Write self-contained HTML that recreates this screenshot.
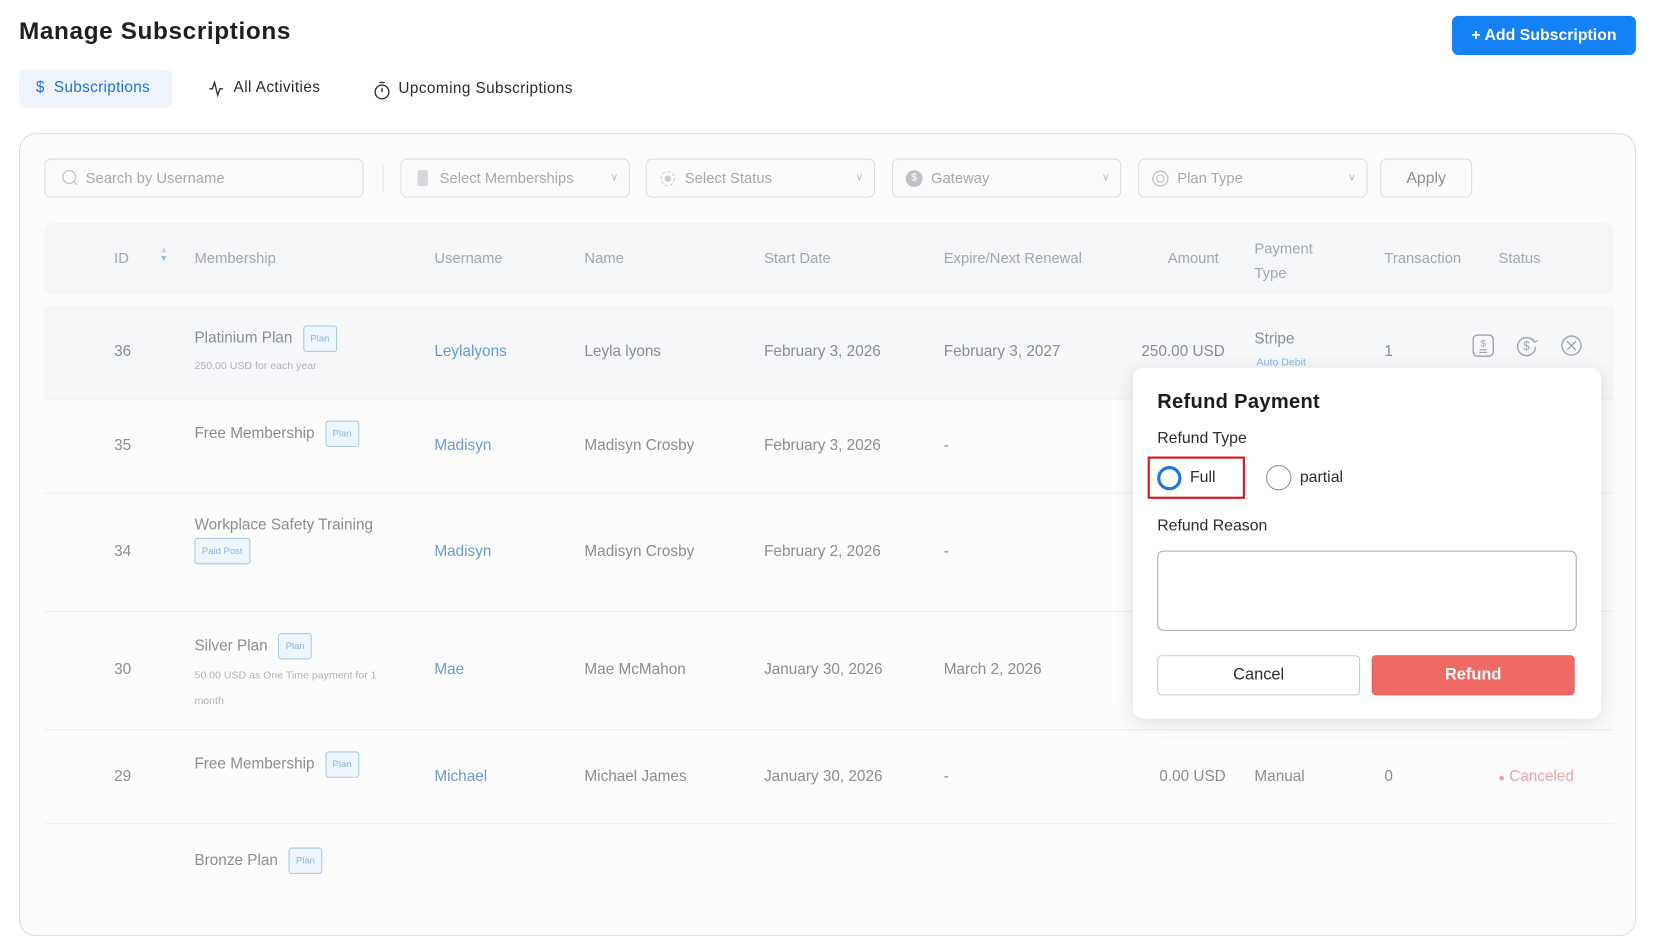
<!DOCTYPE html>
<html><head><meta charset="utf-8">
<style>
*{box-sizing:border-box;margin:0;padding:0}
html,body{width:1657px;height:856px;overflow:hidden;background:#fff;font-family:"Liberation Sans",sans-serif}
#w{position:absolute;left:0;top:0;width:1568px;height:810px;transform:scale(1.0568);transform-origin:0 0}
.a{position:absolute;white-space:nowrap}
.t{font-size:14px;color:#8a8d92}
.sel{position:absolute;top:150px;height:37px;border:1px solid #dcdee2;border-radius:6px;background:#fbfbfc;font-size:14px;color:#a6a9ae;line-height:35px}
.chev{position:absolute;right:10px;top:0;font-size:10px;color:#bbb}
.row{position:absolute;left:42px;width:1485px;border-bottom:1px solid #eceef1}
.badge{display:inline-block;border:1px solid #a9c8ea;background:#eef5fd;color:#8eb3dc;font-size:9px;border-radius:3px;padding:0 6px;height:25px;line-height:23px;vertical-align:middle;margin-left:10px}
.u{color:#6a9ad4;font-size:14.5px}
.sub{font-size:10px;color:#b0b3b8}
</style></head><body><div id="w">
<div class="a" style="left:18px;top:16px;font-size:23px;font-weight:bold;color:#1d1f23;letter-spacing:.6px">Manage Subscriptions</div>
<div class="a" style="left:1374px;top:15px;width:174px;height:37px;background:#1680f5;border-radius:6px;color:#fff;font-size:15px;font-weight:bold;line-height:37px;text-align:center">+ Add Subscription</div>

<div class="a" style="left:18px;top:66px;width:145px;height:36px;background:#edf4fc;border-radius:6px"></div>
<div class="a" style="left:34px;top:75px;font-size:14.5px;color:#1f74d6;letter-spacing:.3px">$&nbsp;&nbsp;Subscriptions</div>
<svg class="a" style="left:197px;top:75px" width="18" height="18" viewBox="0 0 18 18"><path d="M1 9h3l2-6 3 12 2-6h3" fill="none" stroke="#333" stroke-width="1.3"/></svg>
<div class="a" style="left:221px;top:75px;font-size:14.5px;color:#2a2c30;letter-spacing:.4px">All Activities</div>
<svg class="a" style="left:353px;top:76px" width="17" height="19" viewBox="0 0 17 19"><circle cx="8.5" cy="11" r="6.5" fill="none" stroke="#333" stroke-width="1.3"/><path d="M6 2h5M8.5 11V7" stroke="#333" stroke-width="1.3"/></svg>
<div class="a" style="left:377px;top:76px;font-size:14.5px;color:#2a2c30;letter-spacing:.4px">Upcoming Subscriptions</div>

<div class="a" style="left:18px;top:126px;width:1530px;height:760px;border:1px solid #d9dbde;border-radius:16px;background:#fcfcfd"></div>

<div class="sel" style="left:42px;width:302px;padding-left:38px">Search by Username</div>
<svg class="a" style="left:58px;top:160px" width="17" height="17"><circle cx="7.5" cy="7.5" r="6" fill="none" stroke="#c3c5c9" stroke-width="1.2"/><path d="M12 12l3 3" stroke="#c3c5c9" stroke-width="1.2"/></svg>
<div class="a" style="left:362px;top:156px;width:1px;height:26px;background:#e2e3e6"></div>
<div class="sel" style="left:379px;width:217px;padding-left:36px">Select Memberships<span class="chev">&#8744;</span></div>
<div class="a" style="left:395px;top:161px;width:10px;height:15px;background:#d5d8de;border-radius:2px"></div>
<div class="sel" style="left:611px;width:217px;padding-left:36px">Select Status<span class="chev">&#8744;</span></div>
<svg class="a" style="left:624px;top:161px" width="16" height="16"><circle cx="8" cy="8" r="6.5" fill="none" stroke="#ccc" stroke-dasharray="3 2"/><circle cx="8" cy="8" r="3" fill="#ccc"/></svg>
<div class="sel" style="left:844px;width:217px;padding-left:36px">Gateway<span class="chev">&#8744;</span></div>
<div class="a" style="left:857px;top:161px;width:16px;height:16px;border-radius:50%;background:#bfc3c9;color:#fff;font-size:10px;text-align:center;line-height:16px">$</div>
<div class="sel" style="left:1077px;width:217px;padding-left:36px">Plan Type<span class="chev">&#8744;</span></div>
<svg class="a" style="left:1089px;top:160px" width="18" height="18"><circle cx="9" cy="9" r="7" fill="none" stroke="#c6c9ce" stroke-width="1.5"/><circle cx="9" cy="9" r="3.5" fill="none" stroke="#c6c9ce" stroke-width="1.3"/></svg>
<div class="sel" style="left:1306px;width:87px;text-align:center;color:#8d9096;font-size:15px">Apply</div>

<div class="a" style="left:42px;top:211px;width:1485px;height:67px;background:#f5f6f8;border-radius:8px"></div>
<div class="a t" style="left:108px;top:236px;color:#a3a6ab">ID</div>
<div class="a" style="left:151px;top:233px;font-size:8px;line-height:8px;color:#cfd2d6">▲<br><span style="color:#8bb4e3">▼</span></div>
<div class="a t" style="left:184px;top:236px;color:#a3a6ab">Membership</div>
<div class="a t" style="left:411px;top:236px;color:#a3a6ab">Username</div>
<div class="a t" style="left:553px;top:236px;color:#a3a6ab">Name</div>
<div class="a t" style="left:723px;top:236px;color:#a3a6ab">Start Date</div>
<div class="a t" style="left:893px;top:236px;color:#a3a6ab">Expire/Next Renewal</div>
<div class="a t" style="left:1105px;top:236px;color:#a3a6ab">Amount</div>
<div class="a t" style="left:1187px;top:224px;color:#a3a6ab;line-height:23px">Payment<br>Type</div>
<div class="a t" style="left:1310px;top:236px;color:#a3a6ab">Transaction</div>
<div class="a t" style="left:1418px;top:236px;color:#a3a6ab">Status</div>

<div class="row" style="top:290px;height:88px;background:#f6f7f9"></div>
<div class="row" style="top:378px;height:89px"></div>
<div class="row" style="top:467px;height:112px"></div>
<div class="row" style="top:579px;height:112px"></div>
<div class="row" style="top:691px;height:89px"></div>

<div class="a t" style="left:108px;top:325px;font-size:14.5px">36</div>
<div class="a t" style="left:184px;top:308px;font-size:14.5px">Platinium Plan<span class="badge">Plan</span></div>
<div class="a sub" style="left:184px;top:341px">250.00 USD for each year</div>
<div class="a u" style="left:411px;top:325px">Leylalyons</div>
<div class="a t" style="left:553px;top:325px;font-size:14.5px">Leyla lyons</div>
<div class="a t" style="left:723px;top:325px;font-size:14.5px">February 3, 2026</div>
<div class="a t" style="left:893px;top:325px;font-size:14.5px">February 3, 2027</div>
<div class="a t" style="left:1080px;top:325px;font-size:14.5px">250.00 USD</div>
<div class="a t" style="left:1187px;top:313px;font-size:14.5px">Stripe</div>
<div class="a" style="left:1189px;top:338px;font-size:10px;color:#8bb4e3">Auto Debit</div>
<div class="a t" style="left:1310px;top:325px;font-size:14.5px">1</div>
<svg class="a" style="left:1392px;top:315px" width="24" height="24"><rect x="2" y="2" width="19" height="20" rx="4" fill="none" stroke="#a0a3a8" stroke-width="1.3"/><text x="11.5" y="13" font-size="9" text-anchor="middle" fill="#a0a3a8" font-family="Liberation Sans">$</text><path d="M8 16h7M8 18.5h7" stroke="#a0a3a8"/></svg>
<svg class="a" style="left:1433px;top:315px" width="24" height="24"><path d="M19 9A8.5 8.5 0 1 0 20 13" fill="none" stroke="#a0a3a8" stroke-width="1.3"/><path d="M17 5l2 4 3-2" fill="none" stroke="#a0a3a8"/><text x="11.5" y="16" font-size="11" text-anchor="middle" fill="#a0a3a8" font-family="Liberation Sans">$</text></svg>
<svg class="a" style="left:1475px;top:315px" width="24" height="24"><circle cx="12" cy="12" r="9" fill="none" stroke="#a0a3a8" stroke-width="1.3"/><path d="M8 8l8 8M16 8l-8 8" stroke="#a0a3a8" stroke-width="1.3"/></svg>

<div class="a t" style="left:108px;top:414px;font-size:14.5px">35</div>
<div class="a t" style="left:184px;top:398px;font-size:14.5px">Free Membership<span class="badge">Plan</span></div>
<div class="a u" style="left:411px;top:414px">Madisyn</div>
<div class="a t" style="left:553px;top:414px;font-size:14.5px">Madisyn Crosby</div>
<div class="a t" style="left:723px;top:414px;font-size:14.5px">February 3, 2026</div>
<div class="a t" style="left:893px;top:414px;font-size:14.5px">-</div>

<div class="a t" style="left:108px;top:514px;font-size:14.5px">34</div>
<div class="a t" style="left:184px;top:489px;font-size:14.5px">Workplace Safety Training</div>
<div class="a" style="left:184px;top:509px"><span class="badge" style="margin-left:0">Paid Post</span></div>
<div class="a u" style="left:411px;top:514px">Madisyn</div>
<div class="a t" style="left:553px;top:514px;font-size:14.5px">Madisyn Crosby</div>
<div class="a t" style="left:723px;top:514px;font-size:14.5px">February 2, 2026</div>
<div class="a t" style="left:893px;top:514px;font-size:14.5px">-</div>

<div class="a t" style="left:108px;top:626px;font-size:14.5px">30</div>
<div class="a t" style="left:184px;top:599px;font-size:14.5px">Silver Plan<span class="badge">Plan</span></div>
<div class="a sub" style="left:184px;top:628px;line-height:24px">50.00 USD as One Time payment for 1<br>month</div>
<div class="a u" style="left:411px;top:626px">Mae</div>
<div class="a t" style="left:553px;top:626px;font-size:14.5px">Mae McMahon</div>
<div class="a t" style="left:723px;top:626px;font-size:14.5px">January 30, 2026</div>
<div class="a t" style="left:893px;top:626px;font-size:14.5px">March 2, 2026</div>

<div class="a t" style="left:108px;top:727px;font-size:14.5px">29</div>
<div class="a t" style="left:184px;top:711px;font-size:14.5px">Free Membership<span class="badge">Plan</span></div>
<div class="a u" style="left:411px;top:727px">Michael</div>
<div class="a t" style="left:553px;top:727px;font-size:14.5px">Michael James</div>
<div class="a t" style="left:723px;top:727px;font-size:14.5px">January 30, 2026</div>
<div class="a t" style="left:893px;top:727px;font-size:14.5px">-</div>
<div class="a t" style="left:1097px;top:727px;font-size:14.5px">0.00 USD</div>
<div class="a t" style="left:1187px;top:727px;font-size:14.5px">Manual</div>
<div class="a t" style="left:1310px;top:727px;font-size:14.5px">0</div>
<div class="a" style="left:1418px;top:727px;font-size:14.5px;color:#e9a3a8"><span style="font-size:10px">●</span> Canceled</div>

<div class="a t" style="left:184px;top:802px;font-size:14.5px">Bronze Plan<span class="badge">Plan</span></div>

<div class="a" style="left:1072px;top:348px;width:443px;height:332px;background:#fff;border-radius:10px;box-shadow:0 4px 18px rgba(0,0,0,.12)"></div>
<div class="a" style="left:1095px;top:370px;font-size:19px;font-weight:bold;color:#1a1c20;letter-spacing:.3px">Refund Payment</div>
<div class="a" style="left:1095px;top:406px;font-size:15px;color:#2a2c30">Refund Type</div>
<div class="a" style="left:1086px;top:432px;width:92px;height:40px;border:2px solid #d9141a"></div>
<div class="a" style="left:1095px;top:441px;width:23px;height:23px;border:3.5px solid #1a78e0;border-radius:50%"></div>
<div class="a" style="left:1126px;top:443px;font-size:15px;color:#2a2c30">Full</div>
<div class="a" style="left:1198px;top:440px;width:24px;height:24px;border:1px solid #8d9096;border-radius:50%"></div>
<div class="a" style="left:1230px;top:443px;font-size:15px;color:#2a2c30">partial</div>
<div class="a" style="left:1095px;top:489px;font-size:15px;color:#2a2c30">Refund Reason</div>
<div class="a" style="left:1095px;top:521px;width:397px;height:76px;border:1px solid #a7aaae;border-radius:6px"></div>
<div class="a" style="left:1095px;top:620px;width:192px;height:38px;border:1px solid #c9cbcf;border-radius:4px;text-align:center;line-height:36px;font-size:15.5px;color:#2a2c30">Cancel</div>
<div class="a" style="left:1298px;top:620px;width:192px;height:38px;background:#ef6a64;border:1px solid #e35d58;border-radius:4px;text-align:center;line-height:36px;font-size:15.5px;font-weight:bold;color:#fff">Refund</div>
</div></body></html>
